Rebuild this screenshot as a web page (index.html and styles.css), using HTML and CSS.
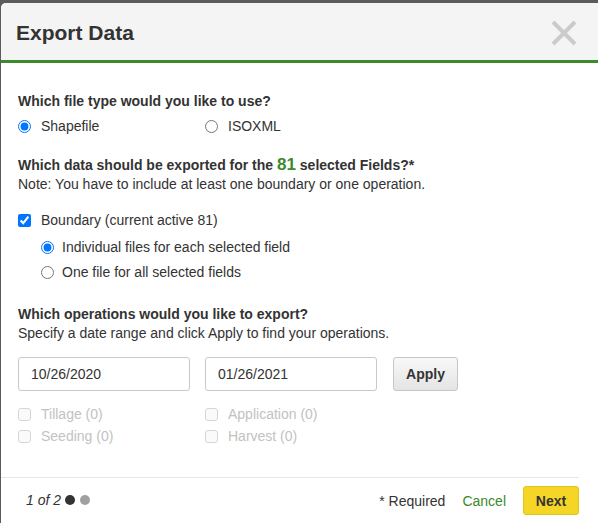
FILE: index.html
```html
<!DOCTYPE html>
<html>
<head>
<meta charset="utf-8">
<link rel="stylesheet" href="styles.css">
</head>
<body>
<div class="modal">
  <div class="header">
    <h1 class="title">Export Data</h1>
    <span class="close" aria-label="Close">
      <svg width="28" height="28" viewBox="0 0 28 28"><path d="M3 3 L25 25 M25 3 L3 25" stroke="#cbcbcb" stroke-width="4" fill="none"/></svg>
    </span>
  </div>
  <div class="body">
    <div class="q q-first">Which file type would you like to use?</div>
    <div class="row opts">
      <label class="opt col"><input type="radio" name="ft" checked>Shapefile</label>
      <label class="opt"><input type="radio" name="ft">ISOXML</label>
    </div>

    <div class="q q-data">Which data should be exported for the <span class="num">81</span> selected Fields?*</div>
    <div class="note">Note: You have to include at least one boundary or one operation.</div>

    <label class="opt boundary"><input type="checkbox" checked>Boundary (current active 81)</label>
    <div class="sub">
      <label class="opt"><input type="radio" name="bf" checked>Individual files for each selected field</label>
      <label class="opt"><input type="radio" name="bf">One file for all selected fields</label>
    </div>

    <div class="q q-ops">Which operations would you like to export?</div>
    <div class="note">Specify a date range and click Apply to find your operations.</div>

    <div class="row dates">
      <input class="date" type="text" value="10/26/2020">
      <input class="date" type="text" value="01/26/2021">
      <button class="apply">Apply</button>
    </div>

    <div class="ops">
      <label class="opt dis"><input type="checkbox" disabled>Tillage (0)</label>
      <label class="opt dis"><input type="checkbox" disabled>Application (0)</label>
      <label class="opt dis"><input type="checkbox" disabled>Seeding (0)</label>
      <label class="opt dis"><input type="checkbox" disabled>Harvest (0)</label>
    </div>
  </div>
  <div class="footer">
    <div class="pager"><span class="pg">1 of 2</span><span class="dot on"></span><span class="dot"></span></div>
    <div class="actions">
      <span class="req">* Required</span>
      <a class="cancel">Cancel</a>
      <button class="next">Next</button>
    </div>
  </div>
</div>
</body>
</html>
```
FILE: styles.css
```css
html, body { margin: 0; padding: 0; }
body {
  background: #5b5b5b;
  font-family: "Liberation Sans", Arial, sans-serif;
  color: #333;
  width: 598px;
  height: 523px;
  overflow: hidden;
}
.modal {
  margin: 3px 0 0 1px;
  width: 610px;
  height: 540px;
  background: #fff;
  border-radius: 5px 0 0 0;
  display: flex;
  flex-direction: column;
}
.header {
  height: 57px;
  background: #f4f4f4;
  border-bottom: 3px solid #3b8a2b;
  border-radius: 5px 0 0 0;
  display: flex;
  align-items: center;
  padding-left: 15px;
  box-sizing: content-box;
  position: relative;
}
.title {
  margin: 0;
  font-size: 21px;
  font-weight: bold;
  color: #333;
  position: relative;
  top: 1px;
}
.close {
  position: absolute;
  left: 549px;
  top: 16px;
  width: 28px;
  height: 28px;
}
.body {
  padding: 0 0 0 17px;
  flex: none;
  height: 414px;
  font-size: 14px;
}
.q {
  font-weight: bold;
  font-size: 14px;
  line-height: 19px;
}
.q-first { margin-top: 29px; }
.row { display: flex; }
.opts { margin-top: 6px; }
.opt {
  display: flex;
  align-items: center;
  font-size: 14px;
  line-height: 19px;
  height: 19px;
}
.opt input {
  margin: 0 10px 0 0;
  width: 13px;
  height: 13px;
}
.col { width: 187px; }
.q-data { margin-top: 19px; }
.num { color: #3b8a2b; font-size: 17px; }
.note { line-height: 19px; }
.boundary { margin-top: 17px; }
.sub {
  margin-top: 8px;
  padding-left: 23px;
  display: flex;
  flex-direction: column;
  gap: 6px;
}
.sub .opt input { margin-right: 8px; }
.q-ops { margin-top: 23px; }
.dates { margin-top: 14px; gap: 15px; align-items: center; }
.date {
  width: 172px;
  height: 34px;
  box-sizing: border-box;
  border: 1px solid #c9c9c9;
  border-radius: 3px;
  padding: 0 12px;
  font-family: "Liberation Sans", Arial, sans-serif;
  font-size: 14px;
  color: #333;
  margin: 0;
}
.apply {
  margin-left: 1px;
  width: 65px;
  height: 34px;
  border: 1px solid #c6c6c6;
  border-radius: 3px;
  background: linear-gradient(#f8f8f8, #e4e4e4);
  font-family: "Liberation Sans", Arial, sans-serif;
  font-weight: bold;
  font-size: 14px;
  color: #333;
  padding: 0;
}
.ops {
  margin-top: 14px;
  display: grid;
  grid-template-columns: 187px auto;
  row-gap: 3px;
}
.dis { color: #c2c2c2; }
.dis input {
  appearance: none;
  -webkit-appearance: none;
  box-sizing: border-box;
  border: 1px solid #d6d6d6;
  border-radius: 3px;
  background: #fafafa;
}
.footer {
  border-top: 1px solid #e6e6e6;
  height: 46px;
  display: flex;
  align-items: center;
  padding-left: 25px;
  width: 578px;
  box-sizing: border-box;
}
.pager {
  display: flex;
  align-items: center;
  font-style: italic;
  font-size: 14px;
  position: relative;
  top: -1px;
}
.pg { margin-right: 4px; }
.dot {
  width: 10px; height: 10px;
  border-radius: 50%;
  background: #a0a0a0;
  margin-left: 5px;
}
.dot.on { background: #333; margin-left: 0; }
.actions {
  margin-left: auto;
  display: flex;
  align-items: center;
  font-size: 14px;
}
.req { margin-right: 17px; }
.cancel { color: #3b8a2b; margin-right: 17px; cursor: pointer; }
.next {
  width: 56px;
  height: 29px;
  background: #f5d525;
  border: 1px solid #e3c41a;
  border-radius: 3px;
  font-family: "Liberation Sans", Arial, sans-serif;
  font-weight: bold;
  font-size: 14px;
  color: #333;
  padding: 0;
}
```
